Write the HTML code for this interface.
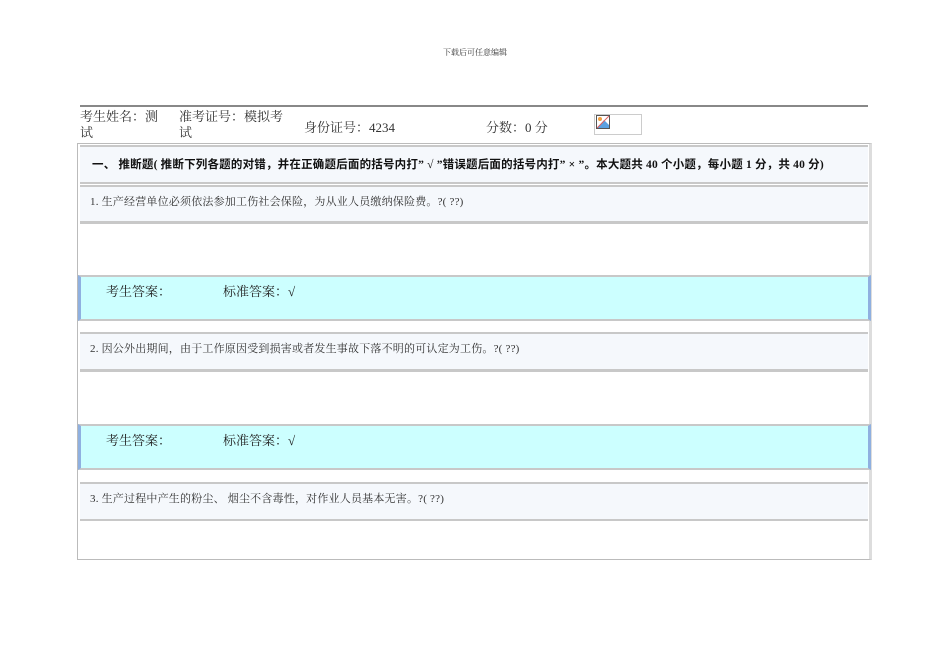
<!DOCTYPE html>
<html><head><meta charset="utf-8"><style>
body{margin:0;width:950px;height:672px;background:#fff;position:relative;font-family:"Liberation Serif","Noto Serif CJK SC",serif;color:#333;overflow:hidden}
.a{position:absolute}
.row{position:absolute;left:80px;width:788px;border-top:2px solid #c8c8c8;border-bottom:2px solid #c8c8c8;box-sizing:border-box}
.lt{background:#f5f8fc}
.cy{background:#ccffff;border-left:3px solid #8fb0e0;border-right:3px solid #8fb0e0;left:78px;width:793px}
.q{font-size:11px;padding-left:10px;line-height:30px;letter-spacing:0.2px}
.ans{font-size:13px;line-height:22px;color:#222}
</style></head><body>
<div class="a" style="left:0;width:950px;top:47px;text-align:center;font-size:8px;color:#333">下载后可任意编辑</div>
<div class="a" style="left:80px;top:105px;width:788px;height:2px;background:#888"></div>
<div class="a" style="left:80px;top:109px;font-size:13px;line-height:16px;width:80px">考生姓名：测<br>试</div>
<div class="a" style="left:179px;top:109px;font-size:13px;line-height:16px;width:110px">准考证号：模拟考<br>试</div>
<div class="a" style="left:304px;top:117px;font-size:13px">身份证号：4234</div>
<div class="a" style="left:486px;top:117px;font-size:13px">分数：0 分</div>
<div class="a" style="left:594px;top:114px;width:48px;height:21px;border:1px solid #ccc;box-sizing:border-box"><svg width="14" height="14" style="position:absolute;left:1px;top:0"><rect x=".5" y=".5" width="13" height="13" fill="#fff" stroke="#555"/><polygon points="1,13 8,5 13,10 13,13" fill="#5aa0e0"/><circle cx="4" cy="4" r="2" fill="#f0a040"/><line x1="1" y1="13" x2="13" y2="1" stroke="#e06060"/></svg></div>
<div class="a" style="left:77px;top:143px;width:795px;height:417px;border:1px solid #bbb;border-right:3px solid #ddd;box-sizing:border-box"></div>
<div class="row lt" style="top:145px;height:39px;font-weight:bold;font-size:11.5px;line-height:36px;padding-left:12px;font-family:'Liberation Serif','Noto Sans CJK SC',serif;color:#111;white-space:nowrap;letter-spacing:0.2px">一、 推断题( 推断下列各题的对错，并在正确题后面的括号内打” √ ”错误题后面的括号内打” × ”。本大题共 40 个小题，每小题 1 分，共 40 分)</div>
<div class="row lt q" style="top:185px;height:38px">1. 生产经营单位必须依法参加工伤社会保险，为从业人员缴纳保险费。?( ??)</div>
<div class="row" style="top:222px;height:54px;border-bottom:none"></div>
<div class="row cy" style="top:275px;height:46px"><span class="a ans" style="left:25px;top:4px">考生答案：</span><span class="a ans" style="left:142px;top:4px">标准答案：<b>√</b></span></div>
<div class="row" style="top:320px;height:13px;border-width:1px"></div>
<div class="row lt q" style="top:332px;height:39px">2. 因公外出期间，由于工作原因受到损害或者发生事故下落不明的可认定为工伤。?( ??)</div>
<div class="row" style="top:370px;height:55px;border-bottom:none"></div>
<div class="row cy" style="top:424px;height:46px"><span class="a ans" style="left:25px;top:4px">考生答案：</span><span class="a ans" style="left:142px;top:4px">标准答案：<b>√</b></span></div>
<div class="row" style="top:469px;height:14px;border-width:1px"></div>
<div class="row lt q" style="top:482px;height:39px">3. 生产过程中产生的粉尘、 烟尘不含毒性，对作业人员基本无害。?( ??)</div>
</body></html>
